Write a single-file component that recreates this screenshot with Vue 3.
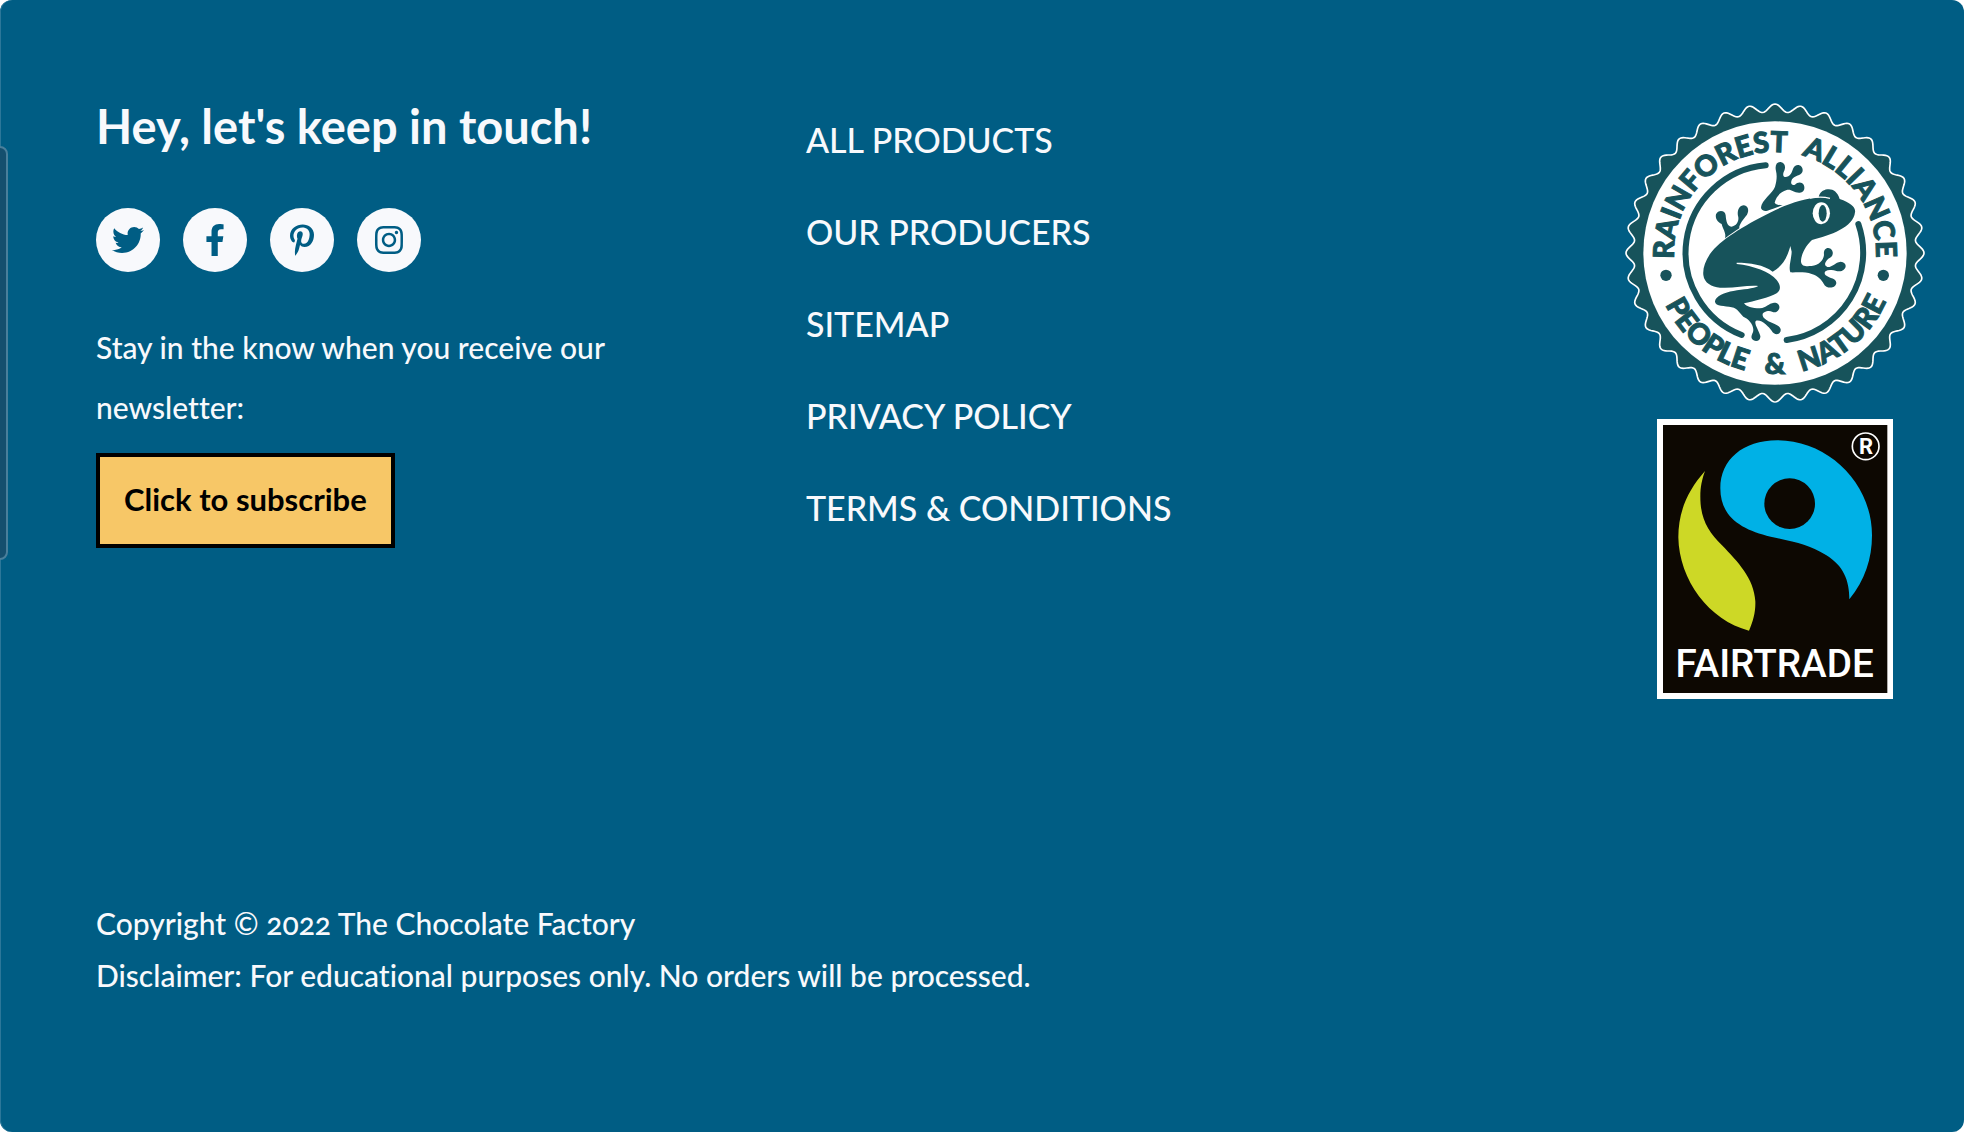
<script setup>
const links = ['All products', 'Our producers', 'Sitemap', 'Privacy policy', 'Terms & conditions']

const socials = [
  {
    name: 'Twitter',
    path: 'M459.37 151.716c.325 4.548.325 9.097.325 13.645 0 138.72-105.583 298.558-298.558 298.558-59.452 0-114.68-17.219-161.137-47.106 8.447.974 16.568 1.299 25.34 1.299 49.055 0 94.213-16.568 130.274-44.832-46.132-.975-84.792-31.188-98.112-72.772 6.498.974 12.995 1.624 19.818 1.624 9.421 0 18.843-1.3 27.614-3.573-48.081-9.747-84.143-51.98-84.143-102.985v-1.299c13.969 7.797 30.214 12.67 47.431 13.319-28.264-18.843-46.781-51.005-46.781-87.391 0-19.492 5.197-37.36 14.294-52.954 51.655 63.675 129.3 105.258 216.365 109.807-1.624-7.797-2.599-15.918-2.599-24.04 0-57.828 46.782-104.934 104.934-104.934 30.213 0 57.502 12.67 76.67 33.137 23.715-4.548 46.456-13.32 66.599-25.34-7.798 24.366-24.366 44.833-46.132 57.827 21.117-2.273 41.584-8.122 60.426-16.243-14.292 20.791-32.161 39.308-52.628 54.253z',
    box: '0 0 512 512'
  },
  {
    name: 'Facebook',
    path: 'M279.14 288l14.22-92.66h-88.91v-60.13c0-25.35 12.42-50.06 52.24-50.06h40.42V6.26S260.43 0 225.36 0c-73.22 0-121.08 44.38-121.08 124.72v70.62H22.89V288h81.39v224h100.17V288z',
    box: '-96 0 512 512'
  },
  {
    name: 'Pinterest',
    path: 'M204 6.5C101.4 6.5 0 74.9 0 185.6 0 256 39.6 296 63.6 296c9.9 0 15.6-27.6 15.6-35.4 0-9.3-23.7-29.1-23.7-67.8 0-80.4 61.2-137.4 140.4-137.4 68.1 0 118.5 38.7 118.5 109.8 0 53.1-21.3 152.7-90.3 152.7-24.9 0-46.2-18-46.2-43.8 0-37.8 26.4-74.4 26.4-113.4 0-66.2-93.9-54.2-93.9 25.8 0 16.8 2.1 35.4 9.6 50.7-13.8 59.4-42 147.9-42 209.1 0 18.9 2.7 37.5 4.5 56.4 3.4 3.8 1.7 3.4 6.9 1.5 50.4-69 48.6-82.5 71.4-172.8 12.3 23.4 44.1 36 69.3 36 106.2 0 153.9-103.5 153.9-196.8C384 71.3 298.2 6.5 204 6.5z',
    box: '-64 0 512 512'
  },
  {
    name: 'Instagram',
    path: 'M224.1 141c-63.6 0-114.9 51.3-114.9 114.9s51.3 114.9 114.9 114.9S339 319.5 339 255.9 287.7 141 224.1 141zm0 189.6c-41.1 0-74.7-33.5-74.7-74.7s33.5-74.7 74.7-74.7 74.7 33.5 74.7 74.7-33.6 74.7-74.7 74.7zm146.4-194.3c0 14.9-12 26.8-26.8 26.8-14.9 0-26.8-12-26.8-26.8s12-26.8 26.8-26.8 26.8 12 26.8 26.8zm76.1 27.2c-1.7-35.9-9.9-67.7-36.2-93.9-26.2-26.2-58-34.4-93.9-36.2-37-2.1-147.9-2.1-184.9 0-35.8 1.7-67.6 9.9-93.9 36.1s-34.4 58-36.2 93.9c-2.1 37-2.1 147.9 0 184.9 1.7 35.9 9.9 67.7 36.2 93.9s58 34.4 93.9 36.2c37 2.1 147.9 2.1 184.9 0 35.9-1.7 67.7-9.9 93.9-36.2 26.2-26.2 34.4-58 36.2-93.9 2.1-37 2.1-147.8 0-184.8zM398.8 388c-7.8 19.6-22.9 34.7-42.6 42.6-29.5 11.7-99.5 9-132.1 9s-102.7 2.6-132.1-9c-19.6-7.8-34.7-22.9-42.6-42.6-11.7-29.5-9-99.5-9-132.1s-2.6-102.7 9-132.1c7.8-19.6 22.9-34.7 42.6-42.6 29.5-11.7 99.5-9 132.1-9s102.7-2.6 132.1 9c19.6 7.8 34.7 22.9 42.6 42.6 11.7 29.5 9 99.5 9 132.1s2.7 102.7-9 132.1z',
    box: '-32 0 512 512'
  }
]

// Scalloped edge of the seal: 36 rounded teeth around the centre.
const points = []
for (let i = 0; i < 720; i++) {
  const a = (i * Math.PI) / 360
  const r = 435 + 12 * Math.cos(36 * a)
  points.push(`${(495 + r * Math.sin(a)).toFixed(1)},${(489 - r * Math.cos(a)).toFixed(1)}`)
}
const scallop = points.join(' ')
</script>

<template>
  <footer class="footer">
    <span class="side-tab" aria-hidden="true"></span>
    <div class="columns">
      <section class="contact">
        <h2 class="title">Hey, let's keep in touch!</h2>
        <ul class="socials">
          <li v-for="s in socials" :key="s.name">
            <a class="social" href="#" :aria-label="s.name">
              <svg class="icon" :viewBox="s.box" aria-hidden="true"><path :d="s.path" /></svg>
            </a>
          </li>
        </ul>
        <p class="lead">Stay in the know when you receive our newsletter:</p>
        <button class="subscribe" type="button">Click to subscribe</button>
      </section>

      <nav class="links" aria-label="Footer">
        <a v-for="l in links" :key="l" class="link" href="#">{{ l }}</a>
      </nav>

      <div class="badges">
        <svg class="seal" viewBox="45 39 900 900" role="img" aria-label="Rainforest Alliance, People and Nature">
          <defs>
            <path id="arc-top" d="M495 792A303 303 0 0 1 495 186A303 303 0 0 1 495 792" />
            <path id="arc-bottom" d="M495 125A364 364 0 0 0 495 853A364 364 0 0 0 495 125" />
          </defs>
          <polygon class="edge" :points="scallop" />
          <circle class="white" cx="495" cy="489" r="395" />
          <g class="seal-text">
            <text><textPath href="#arc-top" startOffset="38%">RAINFOREST</textPath></text>
            <text><textPath href="#arc-top" startOffset="65%">ALLIANCE</textPath></text>
            <text><textPath href="#arc-bottom" startOffset="39%">PEOPLE</textPath></text>
            <text><textPath href="#arc-bottom" startOffset="50%">&amp;</textPath></text>
            <text><textPath href="#arc-bottom" startOffset="61%">NATURE</textPath></text>
          </g>
          <circle class="green" cx="168" cy="556" r="17" />
          <circle class="green" cx="820" cy="556" r="17" />
          <path class="ring" d="M467 226A264 264 0 0 0 395 735M745 402A264 264 0 0 1 530 750" />
          <g class="green">
            <path d="M453 352C455 330 488 310 495 290C501 270 501 255 498 243C494 226 500 215 512 216C528 219 527 235 521 246C516 261 525 264 535 259C548 252 546 235 555 228C568 219 582 232 577 246C572 258 555 255 546 268C540 281 545 287 555 284C562 276 575 274 581 284C587 297 580 310 567 308C550 308 545 297 530 300C512 305 498 320 494 338C500 346 508 344 518 346C500 352 484 358 472 362C460 365 453 360 453 352Z" />
            <path d="M345 445C350 430 337 414 335 402C323 397 315 386 318 373C324 358 346 360 347 376C348 392 352 410 364 410C378 409 387 395 385 382C380 364 386 348 400 346C415 347 418 362 411 374C402 386 386 403 388 415C375 424 360 434 345 445Z" />
            <path d="M735 367C738 352 722 338 689 327C682 304 668 296 652 298C638 300 629 308 626 322C588 325 535 340 480 368C400 408 330 450 300 492C285 515 278 535 280 555C283 580 305 590 330 593C370 596 410 585 445 588C430 597 400 597 370 603C345 607 314 620 315 635C316 650 345 646 365 652C385 656 386 668 400 680C415 686 430 702 430 720C430 730 422 735 425 745C432 758 453 755 451 738C447 722 430 700 438 692C455 687 476 710 485 722C492 737 514 736 512 718C507 700 480 702 462 684C455 674 456 668 470 664C485 659 490 672 500 665C515 655 508 637 492 638C475 640 470 653 450 655C425 655 410 650 402 640C430 634 480 622 500 610C514 600 512 585 500 570C480 546 430 527 380 522L380 518C420 518 462 524 488 545C512 532 530 510 541 468L545 485C544 510 535 530 541 547C555 548 585 544 605 552C625 558 635 570 641 581C648 597 677 597 679 579C679 565 660 566 647 556C640 547 645 541 660 540C675 538 680 546 695 543C712 537 711 516 692 515C675 517 668 532 652 531C642 527 643 517 655 506C671 500 672 484 662 476C648 470 640 480 642 495C640 512 626 526 605 528C588 529 575 530 573 515C573 490 590 465 606 450C660 437 731 412 735 367Z" />
          </g>
          <path class="lid" d="M600 324Q635 318 660 325" />
          <ellipse class="white" cx="634" cy="370" rx="26" ry="33" />
          <ellipse class="green" cx="638" cy="370" rx="12" ry="25" />
        </svg>

        <svg class="fairtrade" viewBox="51 27 708 840" role="img" aria-label="Fairtrade">
          <rect class="white" x="51" y="27" width="708" height="840" />
          <rect class="black" x="69" y="45" width="673" height="804" />
          <path class="leaf" d="M195 183C142 243 115 306 115 382C117 510 208 632 327 662C340 632 347 606 346 574C342 505 293 455 246 406C203 363 181 325 181 260C181 230 186 208 195 183Z" />
          <path class="drop" d="M628 568C675 511 696 446 696 376C696 220 565 91 412 91C308 91 241 150 241 235C241 321 304 359 392 380C470 397 505 403 558 435C610 467 628 510 628 568Z" />
          <circle class="black" cx="449" cy="281" r="76" />
          <circle class="reg-ring" cx="677" cy="109" r="40" />
          <text class="reg" x="678" y="132">R</text>
          <text class="mark" x="404" y="801">FAIRTRADE</text>
        </svg>
      </div>
    </div>

    <div class="legal">
      <p>Copyright © 2022 The Chocolate Factory</p>
      <p>Disclaimer: For educational purposes only. No orders will be processed.</p>
    </div>
  </footer>
</template>

<style>
body {
  margin: 0;
  background: #fff;
}
</style>

<style scoped>
.footer {
  position: relative;
  box-sizing: border-box;
  min-height: 100vh;
  padding: 94px 39px 0 96px;
  overflow: hidden;
  border-radius: 12px;
  background: #005d84;
  box-shadow: inset 1px 0 #2c7799;
  color: #f8f9fc;
  font-family: Lato, "Liberation Sans", sans-serif;
  font-size: 30px;
  font-weight: 500;
  font-variant-ligatures: none;
  font-variant-numeric: oldstyle-nums;
}
.side-tab {
  position: absolute;
  top: 146px;
  left: -12px;
  box-sizing: border-box;
  width: 20px;
  height: 414px;
  border: 2px solid #4a7f9b;
  border-radius: 8px;
  background: #154f6e;
}
.columns {
  display: grid;
  grid-template-columns: 13fr 15fr 300px;
  align-items: start;
}
.title {
  margin: 0;
  font-size: 47px;
  font-weight: 700;
  line-height: 64px;
}
.socials {
  display: flex;
  gap: 23px;
  margin: 50px 0 45px;
  padding: 0;
  list-style: none;
}
.social {
  display: flex;
  align-items: center;
  justify-content: center;
  width: 64px;
  height: 64px;
  border-radius: 50%;
  background: #f8f9fc;
}
.icon {
  width: 32px;
  height: 32px;
  fill: #005d84;
}
.lead {
  max-width: 540px;
  margin: 0 0 16px;
  line-height: 60px;
}
.subscribe {
  box-sizing: border-box;
  height: 95px;
  padding: 0 24px 4px;
  border: 4px solid #000;
  border-radius: 0;
  background: #f7c767;
  color: #000;
  font: 700 31px Lato, "Liberation Sans", sans-serif;
}
.links {
  display: flex;
  flex-direction: column;
  align-items: flex-start;
}
.link {
  color: inherit;
  font-size: 34px;
  line-height: 92px;
  text-decoration: none;
  text-transform: uppercase;
}
.badges {
  display: flex;
  flex-direction: column;
  align-items: center;
  gap: 16px;
  padding-top: 9px;
}
.seal {
  width: 300px;
  height: 300px;
}
.fairtrade {
  width: 236px;
  height: 280px;
}
.edge {
  fill: #17535b;
  stroke: #fff;
  stroke-width: 5px;
}
.white {
  fill: #fff;
}
.green {
  fill: #17535b;
}
.ring {
  fill: none;
  stroke: #17535b;
  stroke-width: 18px;
  stroke-linecap: round;
}
.lid {
  fill: none;
  stroke: #fff;
  stroke-width: 4px;
}
.seal-text {
  fill: #17535b;
  stroke: #17535b;
  stroke-width: 3px;
  font-size: 86px;
  font-weight: 900;
  text-anchor: middle;
}
.black {
  fill: #0d0802;
}
.leaf {
  fill: #cdd826;
}
.drop {
  fill: #00b1e6;
}
.reg-ring {
  fill: none;
  stroke: #fff;
  stroke-width: 5px;
}
.reg,
.mark {
  fill: #fff;
  font-family: Roboto, sans-serif;
  text-anchor: middle;
}
.reg {
  font-size: 66px;
  font-weight: 700;
}
.mark {
  font-size: 116px;
  font-weight: 500;
}
.legal {
  padding: 198px 0 96px;
  line-height: 52px;
}
.legal p {
  margin: 0;
}
</style>
